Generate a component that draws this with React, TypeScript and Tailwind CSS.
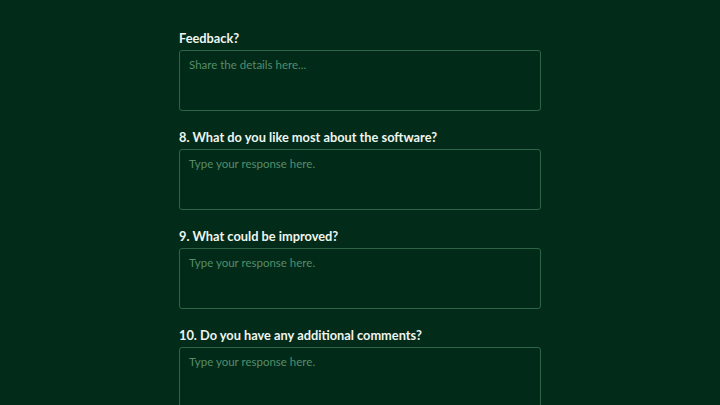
import React from 'react';

const questions = [
  { label: 'Feedback?', placeholder: 'Share the details here...' },
  { label: '8. What do you like most about the software?', placeholder: 'Type your response here.' },
  { label: '9. What could be improved?', placeholder: 'Type your response here.' },
  { label: '10. Do you have any additional comments?', placeholder: 'Type your response here.' },
];

export default function App() {
  return (
    <div
      className="min-h-screen w-full bg-[#032b1a] pt-[28px]"
      style={{ fontFamily: "Lato, 'Open Sans', sans-serif" }}
    >
      <div className="mx-auto flex w-[362px] flex-col gap-[16px]">
        {questions.map((q) => (
          <div key={q.label} className="flex flex-col">
            <label className="mb-[2px] text-[12.8px] font-bold leading-[20px] text-[#eef5ef]">
              {q.label}
            </label>
            <textarea
              placeholder={q.placeholder}
              className="h-[61px] w-full resize-none rounded-[3px] border border-[#2e6546] bg-[#022a19] px-[9px] pt-[6px] text-[11.5px] leading-[16px] text-[#cfe3d5] outline-none placeholder:text-[#558d6a]"
            />
          </div>
        ))}
      </div>
    </div>
  );
}
